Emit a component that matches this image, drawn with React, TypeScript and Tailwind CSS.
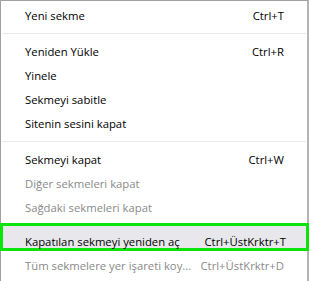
import React from 'react'

type Item = { label: string; shortcut?: string; disabled?: boolean }

const groups: Item[][] = [
  [{ label: 'Yeni sekme', shortcut: 'Ctrl+T' }],
  [
    { label: 'Yeniden Yükle', shortcut: 'Ctrl+R' },
    { label: 'Yinele' },
    { label: 'Sekmeyi sabitle' },
    { label: 'Sitenin sesini kapat' },
  ],
  [
    { label: 'Sekmeyi kapat', shortcut: 'Ctrl+W' },
    { label: 'Diğer sekmeleri kapat', disabled: true },
    { label: 'Sağdaki sekmeleri kapat', disabled: true },
  ],
]

function Row({ label, shortcut, disabled }: Item) {
  return (
    <div
      className={`flex h-6 items-center justify-between pl-6 pr-[23px] ${
        disabled ? 'text-[#8a8a8a]' : 'text-black'
      }`}
    >
      <span>{label}</span>
      {shortcut && <span>{shortcut}</span>}
    </div>
  )
}

function Separator() {
  return <div className="mx-px mb-[6px] mt-[5px] h-px bg-[#e9e9e9]" />
}

export default function App() {
  return (
    <div
      className="h-[281px] w-[309px] overflow-hidden whitespace-nowrap bg-white text-[11.3px] leading-none"
      style={{ fontFamily: '"Open Sans", "Noto Sans", sans-serif' }}
    >
      <div className="h-full w-[309px] border-l border-r-2 border-t border-l-[#a0a0a0] border-r-[#b4b4b4] border-t-[#a0a0a0] pt-[3px]">
        {groups.map((group, i) => (
          <div key={i}>
            {i > 0 && <Separator />}
            {group.map((item) => (
              <Row key={item.label} {...item} />
            ))}
          </div>
        ))}

        {/* highlighted row, outlined */}
        <div className="-ml-px mt-[3px] -mr-[2px] border-[3px] border-[#0be30b] bg-[#e8e8ec]">
          <div className="flex h-[22px] items-end justify-between pb-[1px] pl-[22px] pr-[20px] text-black">
            <span>Kapatılan sekmeyi yeniden aç</span>
            <span>Ctrl+ÜstKrktr+T</span>
          </div>
        </div>

        <div className="mt-[3px] flex h-6 items-center justify-between pl-6 pr-[23px] text-[#8a8a8a]">
          <span>Tüm sekmelere yer işareti koy...</span>
          <span>Ctrl+ÜstKrktr+D</span>
        </div>
      </div>
    </div>
  )
}
